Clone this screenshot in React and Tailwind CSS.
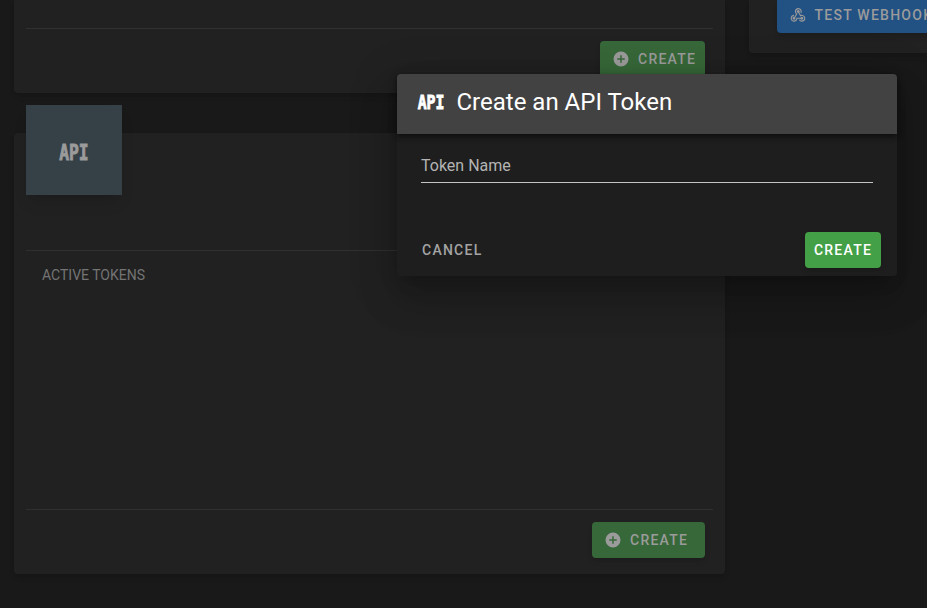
import React from "react";

function PlusCircle() {
  return (
    <svg viewBox="0 0 24 24" className="size-[18px] shrink-0 fill-current">
      <path d="M17 13h-4v4h-2v-4H7v-2h4V7h2v4h4m-5-9a10 10 0 1 0 0 20 10 10 0 0 0 0-20Z" />
    </svg>
  );
}

function Webhook() {
  return (
    <svg viewBox="0 0 24 24" className="size-[18px] shrink-0 fill-current">
      <path d="M10.46,19C9,21.07 6.15,21.59 4.09,20.15C2.04,18.71 1.56,15.84 3,13.75C3.87,12.5 5.21,11.83 6.58,11.77L6.63,13.2C5.72,13.27 4.84,13.74 4.27,14.56C3.27,16 3.58,17.94 4.95,18.91C6.33,19.87 8.26,19.5 9.26,18.07C9.57,17.62 9.75,17.13 9.82,16.63V15.62L15.4,15.58L15.47,15.47C16,14.55 17.15,14.23 18.05,14.75C18.95,15.27 19.26,16.43 18.73,17.35C18.2,18.26 17.04,18.58 16.14,18.06C15.73,17.83 15.44,17.46 15.31,17.04L11.24,17.06C11.13,17.73 10.87,18.38 10.46,19M17.74,11.86C20.27,12.17 22.07,14.44 21.76,16.93C21.45,19.43 19.15,21.2 16.62,20.89C15.13,20.71 13.9,19.86 13.19,18.68L14.43,17.96C14.92,18.73 15.75,19.28 16.75,19.41C18.5,19.62 20.05,18.43 20.26,16.76C20.47,15.09 19.23,13.56 17.5,13.35C16.96,13.29 16.44,13.36 15.97,13.53L15.12,13.97L12.54,9.2H12.32C11.26,9.16 10.41,8.29 10.44,7.25C10.47,6.21 11.4,5.4 12.45,5.44C13.5,5.5 14.33,6.35 14.3,7.39C14.28,7.83 14.11,8.23 13.84,8.54L15.74,12.05C16.36,11.85 17.04,11.78 17.74,11.86M8.25,9.14C7.25,6.79 8.31,4.1 10.62,3.12C12.94,2.14 15.62,3.25 16.62,5.6C17.21,6.97 17.09,8.47 16.42,9.67L15.18,8.95C15.6,8.14 15.67,7.15 15.27,6.22C14.59,4.62 12.78,3.85 11.23,4.5C9.67,5.16 8.97,7 9.65,8.6C9.93,9.26 10.4,9.77 10.97,10.11L11.36,10.32L8.29,15.31C8.32,15.36 8.36,15.42 8.39,15.5C8.88,16.41 8.54,17.56 7.62,18.05C6.71,18.54 5.56,18.18 5.06,17.24C4.57,16.31 4.91,15.16 5.83,14.67C6.22,14.46 6.65,14.41 7.06,14.5L9.37,10.73C8.9,10.3 8.5,9.76 8.25,9.14Z" />
    </svg>
  );
}

function ApiMark({ className }) {
  return (
    <span className={`flex shrink-0 items-center justify-center font-['DejaVu_Sans_Mono',monospace] font-bold leading-none [-webkit-text-stroke:0.9px_currentColor] ${className}`}>
      <span className="block scale-x-[.74]">API</span>
    </span>
  );
}

const label = "text-sm font-medium tracking-[1.25px] whitespace-nowrap";

function DimCreate({ className }) {
  return (
    <button className={`flex h-9 items-center gap-2 rounded bg-[#376839] pl-3 text-[#9b9b9b] shadow-md ${label} ${className}`}>
      <PlusCircle />
      CREATE
    </button>
  );
}

export default function App() {
  return (
    <div className="relative h-[608px] w-[927px] overflow-hidden bg-[#191919] font-[Roboto,sans-serif] antialiased">
      <div className="flex items-start gap-6 pl-3.5">
        <main className="w-[711px] shrink-0">
          <section className="h-[93px] rounded-b bg-[#212121] px-3 pt-7 shadow-md">
            <div className="flex justify-end border-t border-[#303030] pt-3 pr-2">
              <DimCreate className="w-[105px]" />
            </div>
          </section>
          <section className="mt-10 flex h-[441px] flex-col rounded bg-[#212121] px-3 shadow-md">
            <div className="-mt-7 flex h-[90px] w-24 shrink-0 items-center justify-center bg-[#364047] text-[#9b9b9b] shadow-lg">
              <ApiMark className="w-8 pt-1.5 text-[22px]" />
            </div>
            <div className="mt-[55px] h-[259px] border-t border-[#303030] px-4 pt-3.5 text-sm leading-5 text-[#747474]">
              ACTIVE TOKENS
            </div>
            <div className="flex justify-end border-t border-[#303030] pt-3 pr-2">
              <DimCreate className="w-[113px]" />
            </div>
          </section>
        </main>
        <aside className="h-[53px] w-[320px] shrink-0 rounded-b bg-[#212121] pl-7 shadow-md">
          <button className={`flex h-[33px] w-[170px] items-center gap-2 rounded-b bg-[#225184] pb-1 pl-[11.5px] text-[#9b9b9b] shadow-md ${label}`}>
            <Webhook />
            TEST WEBHOOK
          </button>
        </aside>
      </div>

      <div role="dialog" className="absolute top-[74px] left-[397px] flex h-[202px] w-[500px] flex-col rounded bg-[#1e1e1e] shadow-[0_11px_15px_-7px_rgba(0,0,0,.2),0_24px_38px_3px_rgba(0,0,0,.14),0_9px_46px_8px_rgba(0,0,0,.12)]">
        <header className="flex h-[60px] shrink-0 gap-[10.5px] rounded-t bg-[#424242] pl-[19px] text-white shadow-[0_2px_4px_-1px_rgba(0,0,0,.4),0_4px_5px_rgba(0,0,0,.2),0_1px_10px_rgba(0,0,0,.15)]">
          <ApiMark className="h-14 w-[30px] text-[20px]" />
          <h1 className="text-2xl leading-[56px]">Create an API Token</h1>
        </header>
        <div className="mx-6 flex h-[49px] items-end border-b border-[#c4c4c4] pb-1 text-base leading-6 text-[#b4b4b4]">
          Token Name
        </div>
        <footer className="mt-[49px] flex items-center justify-between pr-4 pl-[25px]">
          <button className={`${label} text-[#a3a3a3]`}>CANCEL</button>
          <button className={`h-9 w-[76px] rounded bg-[#43a047] text-center text-white shadow-md ${label}`}>CREATE</button>
        </footer>
      </div>
    </div>
  );
}
